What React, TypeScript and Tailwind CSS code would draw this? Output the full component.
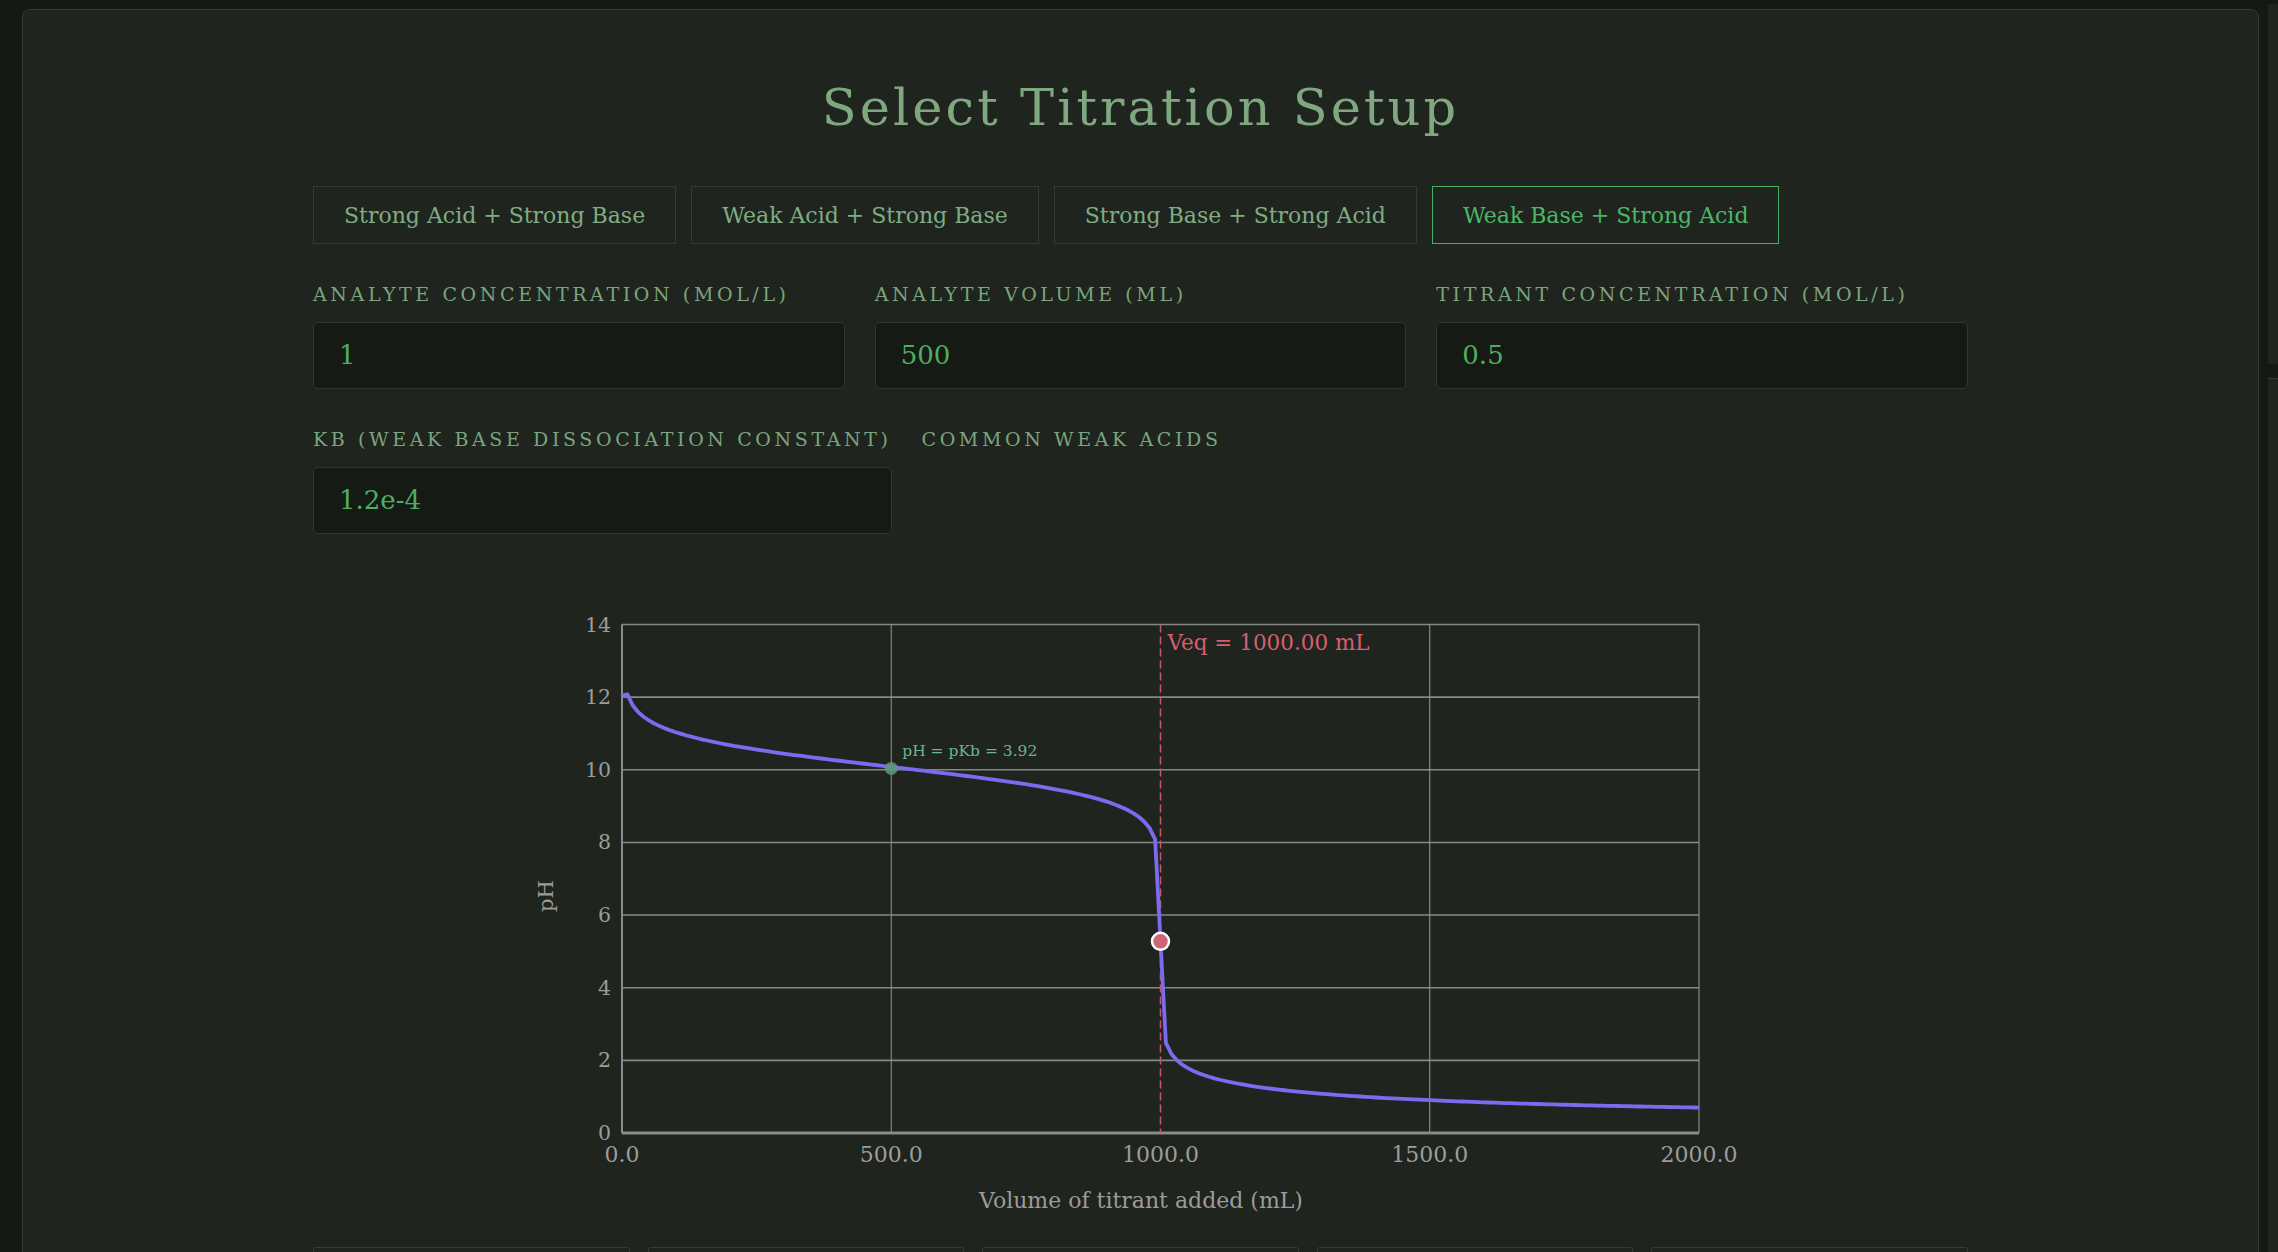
import React from "react";

const FONT = { fontFamily: '"DejaVu Serif", "Liberation Serif", serif' };

const Kb = 1.2e-4;
const Ca = 1; // analyte conc
const Va = 500; // mL
const Ct = 0.5; // titrant conc
const pKb = -Math.log10(Kb);
const nBase = (Ca * Va) / 1000;
const Veq = (nBase / Ct) * 1000;

function phAt(v: number): number {
  if (v === 0) {
    const oh = Math.sqrt(Kb * Ca);
    return 14 + Math.log10(oh);
  }
  const nAcid = (Ct * v) / 1000;
  const totalL = (Va + v) / 1000;
  if (nAcid < nBase - 1e-12) {
    const pOH = pKb + Math.log10(nAcid / (nBase - nAcid));
    return 14 - pOH;
  }
  if (Math.abs(nAcid - nBase) < 1e-12) {
    const Ka = 1e-14 / Kb;
    const c = nBase / totalL;
    return -Math.log10(Math.sqrt(Ka * c));
  }
  const h = (nAcid - nBase) / totalL;
  return -Math.log10(h);
}

const W = 1220;
const H = 650;
const ML = 91;
const MR = 52;
const MT = 40.5;
const PB = 549;
const xS = (v: number) => ML + (v / 2000) * (W - ML - MR);
const yS = (p: number) => PB - (p / 14) * (PB - MT);

function Chart() {
  const pts: string[] = [];
  for (let v = 0; v <= 2000; v += 10) {
    pts.push(`${xS(v).toFixed(2)},${yS(phAt(v)).toFixed(2)}`);
  }
  const yTicks = [0, 2, 4, 6, 8, 10, 12, 14];
  const xTicks = [0, 500, 1000, 1500, 2000];
  const halfPh = phAt(Veq / 2);
  const eqPh = phAt(Veq);
  return (
    <svg width={W} height={H} viewBox={`0 0 ${W} ${H}`} style={FONT}>
      {yTicks.map((t) => (
        <line
          key={"h" + t}
          x1={ML}
          x2={W - MR}
          y1={yS(t)}
          y2={yS(t)}
          stroke="#858883"
          strokeWidth={1.6}
        />
      ))}
      {xTicks.map((t) =>
        t === 500 || t === 1000 ? null : (
          <line
            key={"v" + t}
            x1={xS(t)}
            x2={xS(t)}
            y1={MT}
            y2={PB}
            stroke="#9a9c98"
            strokeWidth={1}
          />
        )
      )}
      <line x1={xS(500)} x2={xS(500)} y1={MT} y2={PB} stroke="#7f9f8d" strokeWidth={1} />
      <line x1={ML} x2={ML} y1={MT} y2={PB} stroke="#8a8c88" strokeWidth={2} />
      <line x1={ML} x2={W - MR} y1={PB} y2={PB} stroke="#8a8c88" strokeWidth={3} />
      <line
        x1={xS(Veq)}
        x2={xS(Veq)}
        y1={MT}
        y2={PB}
        stroke="#c8566a"
        strokeWidth={1.5}
        strokeDasharray="8 4"
      />
      <text x={xS(Veq) + 7} y={66} fill="#d65f6f" fontSize={21.5}>
        Veq = 1000.00 mL
      </text>
      <polyline points={pts.join(" ")} fill="none" stroke="#7a6bef" strokeWidth={3.8} strokeLinejoin="round" />
      <circle cx={xS(Veq / 2)} cy={yS(halfPh) + 1.5} r={6.5} fill="#5d9a7c" fillOpacity={0.85} />
      <text x={xS(Veq / 2) + 11} y={172} fill="#6cb58a" fontSize={15.5}>
        pH = pKb = 3.92
      </text>
      <circle cx={xS(Veq)} cy={yS(eqPh)} r={8.5} fill="#cd6577" stroke="#ffffff" strokeWidth={2.5} />
      {yTicks.map((t) => (
        <text
          key={"yl" + t}
          x={ML - 11}
          y={yS(t)}
          textAnchor="end"
          dominantBaseline="central"
          fill="#9c9c98"
          fontSize={20.5}
        >
          {t}
        </text>
      ))}
      {xTicks.map((t) => (
        <text
          key={"xl" + t}
          x={xS(t)}
          y={570}
          textAnchor="middle"
          dominantBaseline="central"
          fill="#9c9c98"
          fontSize={22}
        >
          {t.toFixed(1)}
        </text>
      ))}
      <text x={W / 2} y={616} textAnchor="middle" dominantBaseline="central" fill="#9c9c98" fontSize={22}>
        Volume of titrant added (mL)
      </text>
      <text
        x={15}
        y={312}
        textAnchor="middle"
        dominantBaseline="central"
        fill="#9c9c98"
        fontSize={21}
        transform="rotate(-90 15 312)"
      >
        pH
      </text>
    </svg>
  );
}

const buttons = [
  "Strong Acid + Strong Base",
  "Weak Acid + Strong Base",
  "Strong Base + Strong Acid",
  "Weak Base + Strong Acid",
];

const LABEL = "text-[19px] leading-[20px] tracking-[0.19em] text-[#7ba57e] uppercase whitespace-nowrap";

function Field({ label, value }: { label: string; value: string }) {
  return (
    <div className="flex flex-col">
      <div className={LABEL}>{label}</div>
      <div className="mt-[18px] h-[67px] rounded-[5px] border border-[#30372f] bg-[#161a15] flex items-center pl-[25px] text-[26px] text-[#4eae62]">
        {value}
      </div>
    </div>
  );
}

export default function App() {
  return (
    <div className="min-h-[1252px] w-[2278px] bg-[#151915] flex overflow-hidden" style={FONT}>
      <div className="ml-[22px] mt-[9px] w-[2237px] h-[1300px] rounded-t-[8px] border border-[#343a33] bg-[#1f241f] flex flex-col items-center">
        <h1 className="mt-[72px] text-[51px] leading-[52px] tracking-[0.06em] text-[#80a880] font-normal">
          Select Titration Setup
        </h1>
        <div className="w-[1655px] flex flex-col">
          <div className="mt-[52px] flex gap-[15px]">
            {buttons.map((b, i) => (
              <div
                key={b}
                className={
                  "h-[58px] px-[30px] flex items-center text-[22px] border " +
                  (i === 3 ? "border-[#4aae62] text-[#4db766]" : "border-[#343b33] text-[#80ac84]")
                }
              >
                {b}
              </div>
            ))}
          </div>
          <div className="mt-[40px] grid grid-cols-3 gap-x-[30px]">
            <Field label="Analyte Concentration (mol/L)" value="1" />
            <Field label="Analyte Volume (mL)" value="500" />
            <Field label="Titrant Concentration (mol/L)" value="0.5" />
          </div>
          <div className="mt-[40px] flex gap-[30px] items-start">
            <Field label="Kb (Weak Base Dissociation Constant)" value="1.2e-4" />
            <div className={LABEL}>Common Weak Acids</div>
          </div>
          <div className="mt-[50px] flex justify-center">
            <Chart />
          </div>
          <div className="mt-[13px] grid grid-cols-5 gap-x-[18px]">
            {[0, 1, 2, 3, 4].map((i) => (
              <div key={i} className="h-[60px] border border-[#353c34] rounded-t-[3px]" />
            ))}
          </div>
        </div>
      </div>
      <div className="ml-[9px] flex flex-col w-[10px]">
        <div className="mt-[4px] h-[360px] bg-[#1f241f]" />
        <div className="mt-[14px] flex-1 border-t border-[#343a33] bg-[#1f241f]" />
      </div>
    </div>
  );
}
